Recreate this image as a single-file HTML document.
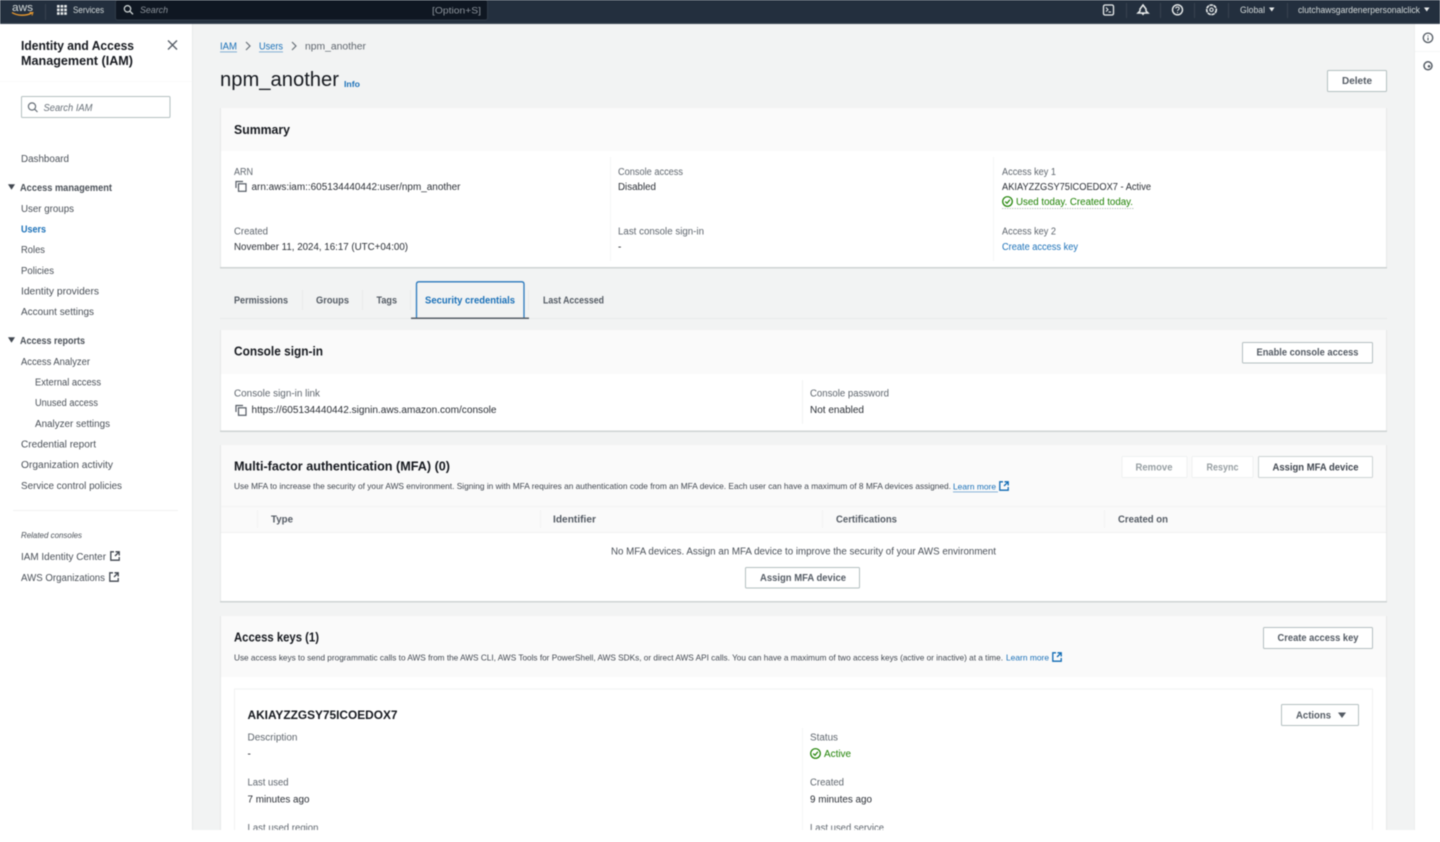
<!DOCTYPE html>
<html lang="en"><head><meta charset="utf-8"><title>npm_another - IAM</title>
<style>
html,body{margin:0;padding:0;background:#fff;width:1440px;height:842px;overflow:hidden}
svg{display:block;position:absolute;left:0;top:0;filter:blur(.5px)}
text{font-family:"Liberation Sans",sans-serif;font-size:10px;fill:#16191f;white-space:pre}
.b{font-weight:700}
.s{fill:#4a5058}.g{fill:#5f666e}.bl{fill:#1a70b8}.gr{fill:#1d8102}.w{fill:#d5dbdb}
.btn{font-weight:700;fill:#545b64}
.i{font-style:italic}
.ic{fill:none;stroke:#545b64;stroke-width:1.2}
</style></head><body>
<svg width="1440" height="842" viewBox="0 0 1440 842" xmlns="http://www.w3.org/2000/svg">
<defs>
<g id="copy"><path class="ic" d="M0 7V0.500H7"/><rect class="ic" x="2.500" y="2.800" width="7.500" height="7.500"/></g>
<g id="ext"><path d="M4 0.800H0.800V9.200H9.200V6" fill="none" stroke-width="1.300" stroke="currentColor"/><path d="M5.500 0.800H9.200V4.500M9.200 0.800L5 5" fill="none" stroke-width="1.300" stroke="currentColor"/></g>
<g id="ok"><circle cx="5.500" cy="5.500" r="4.800" fill="none" stroke="#1d8102" stroke-width="1.200"/><path d="M3.200 5.600L5 7.300L7.900 3.800" fill="none" stroke="#1d8102" stroke-width="1.200"/></g>
</defs>
<!-- backgrounds -->
<rect width="1440" height="842" fill="#fff"/>
<rect x="192" y="24" width="1222" height="806" fill="#f2f3f3"/>
<rect x="192" y="24" width="1" height="806" fill="#e8eaea"/>
<rect x="1414" y="24" width="26" height="806" fill="#fff"/>
<rect x="1414" y="24" width="1" height="806" fill="#eceeee"/>
<rect x="1415" y="51" width="25" height="1" fill="#f5f6f6"/>
<!-- top bar -->
<rect width="1440" height="24" fill="#232f3e"/>
<rect y="23" width="1440" height="1" fill="#3b4654"/>
<text x="12" y="11" textLength="21" lengthAdjust="spacingAndGlyphs" style="font-size:11px" class="w">aws</text>
<path d="M12 12.500C17 16 26 16 32 13" fill="none" stroke="#ec9a2d" stroke-width="1.300"/>
<path d="M29.500 12.600L33 12.500L32 15.500" fill="none" stroke="#ec9a2d" stroke-width=".9"/>
<rect x="45" y="4" width="1" height="16" fill="#37424f"/>
<g fill="#eaeded"><rect x="57" y="5" width="2.600" height="2.600"/><rect x="60.600" y="5" width="2.600" height="2.600"/><rect x="64.200" y="5" width="2.600" height="2.600"/><rect x="57" y="8.600" width="2.600" height="2.600"/><rect x="60.600" y="8.600" width="2.600" height="2.600"/><rect x="64.200" y="8.600" width="2.600" height="2.600"/><rect x="57" y="12.200" width="2.600" height="2.600"/><rect x="60.600" y="12.200" width="2.600" height="2.600"/><rect x="64.200" y="12.200" width="2.600" height="2.600"/></g>
<text x="73" y="13" textLength="31" lengthAdjust="spacingAndGlyphs" class="w" style="font-size:9px">Services</text>
<rect x="115.500" y="0" width="372" height="20" rx="2" fill="#0f1722" stroke="#303b48"/>
<circle cx="127.500" cy="8.800" r="3.200" fill="none" stroke="#d5dbdb" stroke-width="1.200"/><path d="M130 11.300L133 14.300" stroke="#d5dbdb" stroke-width="1.300"/>
<text x="140" y="13" textLength="28" lengthAdjust="spacingAndGlyphs" class="i" style="font-size:9.500px;fill:#8d949c">Search</text>
<text x="432" y="13.500" textLength="49" lengthAdjust="spacingAndGlyphs" style="font-size:9.500px;fill:#8d949c">[Option+S]</text>
<!-- top right icons -->
<rect x="1103.500" y="5" width="10" height="10" rx="1.500" fill="none" stroke="#eaeded" stroke-width="1.300"/><path d="M1106 7.500L1108 9.600L1106 11.600M1108.500 12H1111" fill="none" stroke="#eaeded" stroke-width="1"/>
<rect x="1126" y="3" width="1" height="15" fill="#37424f"/>
<path d="M1143 5L1146 9V11L1148 13H1138L1140 11V9Z" fill="none" stroke="#eaeded" stroke-width="1.500"/><path d="M1141.500 13.500H1144.500L1143 15.500Z" fill="#eaeded"/>
<rect x="1160" y="3" width="1" height="15" fill="#37424f"/>
<circle cx="1177.500" cy="9.800" r="5" fill="none" stroke="#eaeded" stroke-width="1.400"/><path d="M1175.800 8.500C1175.800 6.500 1179.200 6.500 1179.200 8.500C1179.200 9.800 1177.500 9.700 1177.500 11M1177.500 12V13" fill="none" stroke="#eaeded" stroke-width="1"/>
<rect x="1194" y="3" width="1" height="15" fill="#37424f"/>
<circle cx="1211.500" cy="9.800" r="4.800" fill="none" stroke="#eaeded" stroke-width="1.600" stroke-dasharray="3.500 .6"/><circle cx="1211.500" cy="9.800" r="1.700" fill="none" stroke="#eaeded" stroke-width="1.100"/>
<rect x="1228" y="3" width="1" height="15" fill="#37424f"/>
<text x="1240" y="13" textLength="25" lengthAdjust="spacingAndGlyphs" class="w" style="font-size:9px">Global</text>
<path d="M1269 7.500H1274.500L1271.750 11.500Z" fill="#eaeded"/>
<rect x="1287" y="3" width="1" height="15" fill="#37424f"/>
<text x="1298" y="13" textLength="122" lengthAdjust="spacingAndGlyphs" class="w" style="font-size:9px">clutchawsgardenerpersonalclick</text>
<path d="M1424 7.500H1429.500L1426.750 11.500Z" fill="#eaeded"/>
<!-- right rail -->
<circle cx="1428" cy="37.800" r="4.700" fill="none" stroke="#545b64" stroke-width="1.300"/><path d="M1428 35.500V36.500M1428 37.500V40.500" stroke="#545b64" stroke-width="1.100"/>
<circle cx="1428" cy="65.800" r="4" fill="none" stroke="#545b64" stroke-width="1.500"/><circle cx="1429" cy="66.300" r="1.300" fill="#545b64"/>
<!-- sidebar -->
<text class="b" x="21" y="50" textLength="113" lengthAdjust="spacingAndGlyphs" style="font-size:12.500px">Identity and Access</text>
<text class="b" x="21" y="65" textLength="112" lengthAdjust="spacingAndGlyphs" style="font-size:12.500px">Management (IAM)</text>
<path d="M168 40.500L177 49.500M177 40.500L168 49.500" stroke="#545b64" stroke-width="1.300"/>
<rect x="0" y="81" width="192" height="1" fill="#fafafa"/>
<rect x="21.500" y="96.500" width="148.500" height="21" rx="1" fill="#fff" stroke="#b4bfc0"/>
<circle cx="32" cy="106.500" r="3.600" fill="none" stroke="#687078" stroke-width="1.200"/><path d="M34.700 109.200L37.500 112" stroke="#687078" stroke-width="1.200"/>
<text class="i" x="43.500" y="111" textLength="49" lengthAdjust="spacingAndGlyphs" style="fill:#687078">Search IAM</text>
<g transform="translate(0,-.8)">
<text class="s" x="21" y="163" textLength="48" lengthAdjust="spacingAndGlyphs">Dashboard</text>
<path d="M8 185H15L11.500 190.500Z" fill="#414750"/>
<text class="s b" x="20" y="192" textLength="92" lengthAdjust="spacingAndGlyphs">Access management</text>
<text class="s" x="21" y="213" textLength="53" lengthAdjust="spacingAndGlyphs">User groups</text>
<text class="bl b" x="21" y="233.500" textLength="25" lengthAdjust="spacingAndGlyphs">Users</text>
<text class="s" x="21" y="254" textLength="24" lengthAdjust="spacingAndGlyphs">Roles</text>
<text class="s" x="21" y="275" textLength="33" lengthAdjust="spacingAndGlyphs">Policies</text>
<text class="s" x="21" y="295.500" textLength="78" lengthAdjust="spacingAndGlyphs">Identity providers</text>
<text class="s" x="21" y="316" textLength="73" lengthAdjust="spacingAndGlyphs">Account settings</text>
<path d="M8 338H15L11.500 343.500Z" fill="#414750"/>
<text class="s b" x="20" y="345" textLength="65" lengthAdjust="spacingAndGlyphs">Access reports</text>
<text class="s" x="21" y="366" textLength="69" lengthAdjust="spacingAndGlyphs">Access Analyzer</text>
<text class="s" x="35" y="386.500" textLength="66" lengthAdjust="spacingAndGlyphs">External access</text>
<text class="s" x="35" y="407" textLength="63" lengthAdjust="spacingAndGlyphs">Unused access</text>
<text class="s" x="35" y="428" textLength="75" lengthAdjust="spacingAndGlyphs">Analyzer settings</text>
<text class="s" x="21" y="448.500" textLength="75" lengthAdjust="spacingAndGlyphs">Credential report</text>
<text class="s" x="21" y="469" textLength="92" lengthAdjust="spacingAndGlyphs">Organization activity</text>
<text class="s" x="21" y="490" textLength="101" lengthAdjust="spacingAndGlyphs">Service control policies</text>
</g>
<rect x="13" y="510" width="165" height="1" fill="#f1f2f2"/>
<text class="s i" x="21" y="538" textLength="61" lengthAdjust="spacingAndGlyphs" style="font-size:8.500px">Related consoles</text>
<text class="s" x="21" y="560" textLength="85" lengthAdjust="spacingAndGlyphs">IAM Identity Center</text>
<use href="#ext" x="110" y="551" color="#414750"/>
<text class="s" x="21" y="581" textLength="84" lengthAdjust="spacingAndGlyphs">AWS Organizations</text>
<use href="#ext" x="109" y="572" color="#414750"/>
<!-- breadcrumb/title -->
<text class="bl" x="220" y="49.500" textLength="17" lengthAdjust="spacingAndGlyphs">IAM</text><rect x="220" y="51.500" width="17" height=".8" fill="#0f6ab4" opacity=".6"/>
<path d="M246 42L250 46L246 50" fill="none" stroke="#687078" stroke-width="1.200"/>
<text class="bl" x="259" y="49.500" textLength="24" lengthAdjust="spacingAndGlyphs">Users</text><rect x="259" y="51.500" width="24" height=".8" fill="#0f6ab4" opacity=".6"/>
<path d="M292 42L296 46L292 50" fill="none" stroke="#687078" stroke-width="1.200"/>
<text class="g" x="305" y="49.500" textLength="61" lengthAdjust="spacingAndGlyphs">npm_another</text>
<text x="220" y="86" textLength="119" lengthAdjust="spacingAndGlyphs" style="font-size:20px">npm_another</text>
<text class="bl b" x="344" y="87" textLength="16" lengthAdjust="spacingAndGlyphs" style="font-size:8.500px">Info</text>
<rect x="1327.500" y="70.500" width="59" height="21" rx="1" fill="#fff" stroke="#b4bfc0"/>
<text class="btn" x="1342" y="84" textLength="30" lengthAdjust="spacingAndGlyphs">Delete</text>
<!-- summary -->
<rect x="220" y="108" width="1167" height="160" fill="#fff"/>
<rect x="220" y="108" width="1167" height="43" fill="#fafafa"/>
<rect x="220" y="108" width="1" height="160" fill="#e6e8e8"/><rect x="1386" y="108" width="1" height="160" fill="#e6e8e8"/>
<rect x="220" y="267" width="1167" height="1.500" fill="#cfd3d3"/>
<text class="b" x="234" y="134" textLength="56" lengthAdjust="spacingAndGlyphs" style="font-size:12.500px">Summary</text>
<rect x="610" y="157" width="1" height="104" fill="#f5f6f6"/><rect x="993" y="157" width="1" height="104" fill="#f5f6f6"/>
<text class="g" x="234" y="175" textLength="19" lengthAdjust="spacingAndGlyphs">ARN</text>
<use href="#copy" x="236" y="181"/>
<text x="251.500" y="190" textLength="209" lengthAdjust="spacingAndGlyphs" style="fill:#2a2e35">arn:aws:iam::605134440442:user/npm_another</text>
<text class="g" x="234" y="234.500" textLength="34" lengthAdjust="spacingAndGlyphs">Created</text>
<text x="234" y="250" textLength="174" lengthAdjust="spacingAndGlyphs" style="fill:#2a2e35">November 11, 2024, 16:17 (UTC+04:00)</text>
<text class="g" x="618" y="175" textLength="65" lengthAdjust="spacingAndGlyphs">Console access</text>
<text x="618" y="190" textLength="38" lengthAdjust="spacingAndGlyphs" style="fill:#2a2e35">Disabled</text>
<text class="g" x="618" y="234.500" textLength="86" lengthAdjust="spacingAndGlyphs">Last console sign-in</text>
<text x="618" y="250">-</text>
<text class="g" x="1002" y="175" textLength="54" lengthAdjust="spacingAndGlyphs">Access key 1</text>
<text x="1002" y="190" textLength="149" lengthAdjust="spacingAndGlyphs" style="fill:#2a2e35">AKIAYZZGSY75ICOEDOX7 - Active</text>
<use href="#ok" x="1002" y="196"/>
<text class="gr" x="1016" y="205" textLength="117" lengthAdjust="spacingAndGlyphs">Used today. Created today.</text>
<path d="M1002 208.500H1134" stroke="#a9b5ad" stroke-width=".8" stroke-dasharray="1.500 1"/>
<text class="g" x="1002" y="234.500" textLength="54" lengthAdjust="spacingAndGlyphs">Access key 2</text>
<text class="bl" x="1002" y="250" textLength="76" lengthAdjust="spacingAndGlyphs">Create access key</text>
<!-- tabs -->
<rect x="220" y="318" width="1167" height="1" fill="#e8eaea"/>
<rect x="302" y="290" width="1" height="20" fill="#e9ebeb"/><rect x="362" y="290" width="1" height="20" fill="#e9ebeb"/><rect x="410" y="290" width="1" height="20" fill="#e9ebeb"/><rect x="528" y="290" width="1" height="20" fill="#e9ebeb"/>
<text class="btn" x="234" y="303.500" textLength="54" lengthAdjust="spacingAndGlyphs">Permissions</text>
<text class="btn" x="316" y="303.500" textLength="33" lengthAdjust="spacingAndGlyphs">Groups</text>
<text class="btn" x="376.500" y="303.500" textLength="20.500" lengthAdjust="spacingAndGlyphs">Tags</text>
<path d="M416.500 318V284C416.500 282.500 417.500 281.800 419 281.800H521.500C523 281.800 524 282.500 524 284V318" fill="none" stroke="#2a78bd" stroke-width="1.300"/>
<rect x="411" y="317.500" width="118" height="1.500" fill="#555d66"/>
<text class="bl b" x="425" y="303.500" textLength="90" lengthAdjust="spacingAndGlyphs">Security credentials</text>
<text class="btn" x="543" y="303.500" textLength="61" lengthAdjust="spacingAndGlyphs">Last Accessed</text>
<!-- console -->
<rect x="220" y="330" width="1167" height="101" fill="#fff"/>
<rect x="220" y="330" width="1167" height="44" fill="#fafafa"/>
<rect x="220" y="330" width="1" height="101" fill="#e6e8e8"/><rect x="1386" y="330" width="1" height="101" fill="#e6e8e8"/>
<rect x="220" y="430.500" width="1167" height="1.500" fill="#cfd3d3"/>
<text class="b" x="234" y="355.500" textLength="89" lengthAdjust="spacingAndGlyphs" style="font-size:12.500px">Console sign-in</text>
<rect x="1242.500" y="342.500" width="130" height="20.500" rx="1" fill="#fff" stroke="#b4bfc0"/>
<text class="btn" x="1256.500" y="355.500" textLength="102" lengthAdjust="spacingAndGlyphs">Enable console access</text>
<rect x="802" y="380" width="1" height="44" fill="#f2f3f3"/>
<text class="g" x="234" y="396.500" textLength="86" lengthAdjust="spacingAndGlyphs">Console sign-in link</text>
<use href="#copy" x="236" y="405"/>
<text x="251.500" y="413" textLength="245" lengthAdjust="spacingAndGlyphs" style="fill:#2a2e35">https://605134440442.signin.aws.amazon.com/console</text>
<text class="g" x="810" y="396.500" textLength="79" lengthAdjust="spacingAndGlyphs">Console password</text>
<text x="810" y="413" textLength="54" lengthAdjust="spacingAndGlyphs" style="fill:#2a2e35">Not enabled</text>
<!-- MFA -->
<rect x="220" y="445" width="1167" height="157" fill="#fff"/>
<rect x="220" y="445" width="1167" height="87" fill="#fafafa"/>
<rect x="220" y="506" width="1167" height="1" fill="#f3f4f4"/><rect x="220" y="532" width="1167" height="1" fill="#f1f2f2"/>
<rect x="220" y="445" width="1" height="157" fill="#e6e8e8"/><rect x="1386" y="445" width="1" height="157" fill="#e6e8e8"/>
<rect x="220" y="601" width="1167" height="1.500" fill="#cfd3d3"/>
<text class="b" x="234" y="470.500" textLength="216" lengthAdjust="spacingAndGlyphs" style="font-size:12.500px">Multi-factor authentication (MFA) (0)</text>
<text x="234" y="489" textLength="717" lengthAdjust="spacingAndGlyphs" style="font-size:8.500px;fill:#414750">Use MFA to increase the security of your AWS environment. Signing in with MFA requires an authentication code from an MFA device. Each user can have a maximum of 8 MFA devices assigned.</text>
<text class="bl" x="953" y="489.500" textLength="43" lengthAdjust="spacingAndGlyphs" style="font-size:8.500px">Learn more</text><rect x="953" y="491.500" width="45" height=".8" fill="#0f6ab4" opacity=".6"/>
<use href="#ext" x="999" y="481" color="#0f6ab4"/>
<rect x="1122" y="456.500" width="65" height="21" rx="1" fill="#fff" stroke="#eff1f1"/>
<text class="b" x="1135.500" y="470.500" textLength="37" lengthAdjust="spacingAndGlyphs" style="fill:#969ea2">Remove</text>
<rect x="1192" y="456.500" width="61" height="21" rx="1" fill="#fff" stroke="#eff1f1"/>
<text class="b" x="1206.500" y="470.500" textLength="32" lengthAdjust="spacingAndGlyphs" style="fill:#969ea2">Resync</text>
<rect x="1258.500" y="456.500" width="114" height="21" rx="1" fill="#fff" stroke="#cdd2d3"/>
<text class="btn" x="1272.500" y="470.500" textLength="86" lengthAdjust="spacingAndGlyphs" style="fill:#414750">Assign MFA device</text>
<rect x="257" y="510" width="1" height="18" fill="#f3f4f4"/><rect x="540" y="510" width="1" height="18" fill="#f3f4f4"/><rect x="822" y="510" width="1" height="18" fill="#f3f4f4"/><rect x="1104" y="510" width="1" height="18" fill="#f3f4f4"/>
<text class="btn" x="271" y="522.500" textLength="22" lengthAdjust="spacingAndGlyphs">Type</text>
<text class="btn" x="553" y="522.500" textLength="43" lengthAdjust="spacingAndGlyphs">Identifier</text>
<text class="btn" x="836" y="522.500" textLength="61" lengthAdjust="spacingAndGlyphs">Certifications</text>
<text class="btn" x="1118" y="522.500" textLength="50" lengthAdjust="spacingAndGlyphs">Created on</text>
<text class="s" x="611" y="554.500" textLength="385" lengthAdjust="spacingAndGlyphs">No MFA devices. Assign an MFA device to improve the security of your AWS environment</text>
<rect x="745.500" y="567.500" width="114" height="20.500" rx="1" fill="#fff" stroke="#b4bfc0"/>
<text class="btn" x="760" y="581" textLength="86" lengthAdjust="spacingAndGlyphs">Assign MFA device</text>
<!-- Access keys -->
<rect x="220" y="616" width="1167" height="214" fill="#fff"/>
<rect x="220" y="616" width="1167" height="61" fill="#fafafa"/>
<rect x="220" y="616" width="1" height="214" fill="#e6e8e8"/><rect x="1386" y="616" width="1" height="214" fill="#e6e8e8"/>
<text class="b" x="234" y="641.500" textLength="85" lengthAdjust="spacingAndGlyphs" style="font-size:12.500px">Access keys (1)</text>
<text x="234" y="660.500" textLength="769" lengthAdjust="spacingAndGlyphs" style="font-size:8.500px;fill:#414750">Use access keys to send programmatic calls to AWS from the AWS CLI, AWS Tools for PowerShell, AWS SDKs, or direct AWS API calls. You can have a maximum of two access keys (active or inactive) at a time.</text>
<text class="bl" x="1006" y="660.500" textLength="43" lengthAdjust="spacingAndGlyphs" style="font-size:8.500px">Learn more</text>
<use href="#ext" x="1052" y="652" color="#0f6ab4"/>
<rect x="1263.500" y="627.500" width="109" height="21" rx="1" fill="#fff" stroke="#b4bfc0"/>
<text class="btn" x="1277.500" y="641" textLength="81" lengthAdjust="spacingAndGlyphs">Create access key</text>
<!-- inner -->
<rect x="234" y="689" width="1139" height="141" fill="#fff"/>
<rect x="234" y="688.500" width="1139" height="1" fill="#f1f2f2"/><rect x="234" y="689" width="1" height="141" fill="#f1f2f2"/><rect x="1372" y="689" width="1" height="141" fill="#f1f2f2"/>
<text class="b" x="247.500" y="719" textLength="150" lengthAdjust="spacingAndGlyphs" style="font-size:12px">AKIAYZZGSY75ICOEDOX7</text>
<rect x="1281.500" y="704.500" width="77" height="21" rx="1" fill="#fff" stroke="#b4bfc0"/>
<text class="btn" x="1296" y="718.500" textLength="35" lengthAdjust="spacingAndGlyphs">Actions</text>
<path d="M1338 712.500H1346L1342 718Z" fill="#545b64"/>
<rect x="802" y="728" width="1" height="102" fill="#f5f6f6"/>
<text class="g" x="247.500" y="740.300" textLength="50" lengthAdjust="spacingAndGlyphs">Description</text>
<text x="247.500" y="757">-</text>
<text class="g" x="247.500" y="785.300" textLength="41" lengthAdjust="spacingAndGlyphs">Last used</text>
<text x="247.500" y="802.300" textLength="62" lengthAdjust="spacingAndGlyphs" style="fill:#2a2e35">7 minutes ago</text>
<text class="g" x="247.500" y="831" textLength="71" lengthAdjust="spacingAndGlyphs">Last used region</text>
<text class="g" x="810" y="740.300" textLength="28" lengthAdjust="spacingAndGlyphs">Status</text>
<use href="#ok" x="810" y="748"/>
<text class="gr" x="824" y="757" textLength="27" lengthAdjust="spacingAndGlyphs">Active</text>
<text class="g" x="810" y="785.300" textLength="34" lengthAdjust="spacingAndGlyphs">Created</text>
<text x="810" y="802.300" textLength="62" lengthAdjust="spacingAndGlyphs" style="fill:#2a2e35">9 minutes ago</text>
<text class="g" x="810" y="831" textLength="74" lengthAdjust="spacingAndGlyphs">Last used service</text>
<!-- bottom white strip -->
<rect x="0" y="830" width="1440" height="12" fill="#fff"/>
</svg>
</body></html>
